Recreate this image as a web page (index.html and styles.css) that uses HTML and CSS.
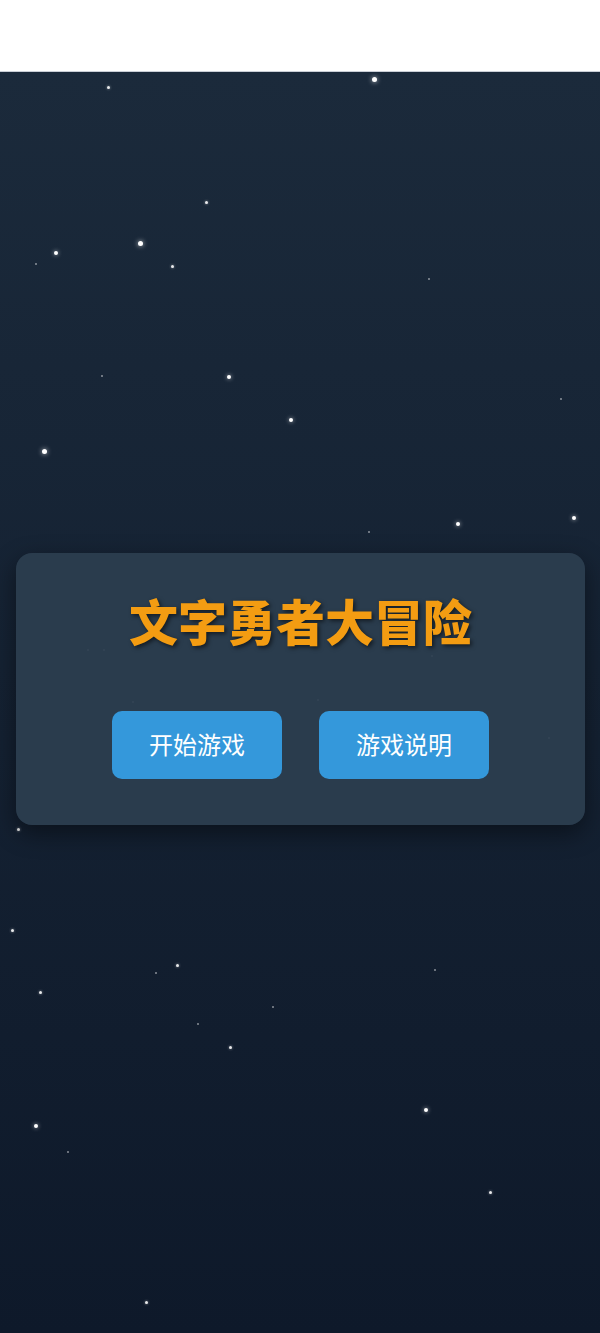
FILE: index.html
```html
<!DOCTYPE html>
<html lang="zh-CN">
<head>
    <meta charset="UTF-8">
    <meta name="viewport" content="width=device-width, initial-scale=1.0">
    <title>文字勇者大冒险</title>
    <link rel="stylesheet" href="styles.css">
</head>
<body>
    <div class="top-bar"></div>

    <div class="game-screen">
        <!-- star field -->
        <div class="stars">
            <span class="star s" style="left:107px;top:86px"></span>
            <span class="star l" style="left:372px;top:77px"></span>
            <span class="star s" style="left:205px;top:201px"></span>
            <span class="star l" style="left:138px;top:241px"></span>
            <span class="star m" style="left:54px;top:251px"></span>
            <span class="star s" style="left:171px;top:265px"></span>
            <span class="star t" style="left:428px;top:278px"></span>
            <span class="star t" style="left:35px;top:263px"></span>
            <span class="star m" style="left:227px;top:375px"></span>
            <span class="star t" style="left:101px;top:375px"></span>
            <span class="star t" style="left:560px;top:398px"></span>
            <span class="star m" style="left:289px;top:418px"></span>
            <span class="star l" style="left:42px;top:449px"></span>
            <span class="star m" style="left:456px;top:522px"></span>
            <span class="star m" style="left:572px;top:516px"></span>
            <span class="star t" style="left:368px;top:531px"></span>
            <span class="star t" style="left:87px;top:649px"></span>
            <span class="star t" style="left:103px;top:649px"></span>
            <span class="star t" style="left:132px;top:701px"></span>
            <span class="star t" style="left:431px;top:655px"></span>
            <span class="star t" style="left:317px;top:699px"></span>
            <span class="star t" style="left:548px;top:737px"></span>
            <span class="star s" style="left:17px;top:828px"></span>
            <span class="star s" style="left:11px;top:929px"></span>
            <span class="star s" style="left:176px;top:964px"></span>
            <span class="star t" style="left:155px;top:972px"></span>
            <span class="star t" style="left:434px;top:969px"></span>
            <span class="star s" style="left:39px;top:991px"></span>
            <span class="star t" style="left:272px;top:1006px"></span>
            <span class="star t" style="left:197px;top:1023px"></span>
            <span class="star s" style="left:229px;top:1046px"></span>
            <span class="star m" style="left:424px;top:1108px"></span>
            <span class="star m" style="left:34px;top:1124px"></span>
            <span class="star t" style="left:67px;top:1151px"></span>
            <span class="star s" style="left:489px;top:1191px"></span>
            <span class="star s" style="left:145px;top:1301px"></span>
        </div>

        <div class="menu-card">
            <h1 class="game-title">文字勇者大冒险</h1>
            <div class="menu-buttons">
                <button class="btn" id="start-btn">开始游戏</button>
                <button class="btn" id="help-btn">游戏说明</button>
            </div>
        </div>
    </div>
</body>
</html>
```

FILE: styles.css
```css
* {
    margin: 0;
    padding: 0;
    box-sizing: border-box;
}

body {
    font-family: "Noto Sans", "Noto Sans CJK SC", sans-serif;
    background: #0e192a;
    min-height: 100vh;
}

.top-bar {
    height: 72px;
    background: #fff;
    border-bottom: 1px solid #c9ced6;
}

.game-screen {
    min-height: 1261px;
    background: linear-gradient(180deg, #1b2a3b 0%, #0e192a 100%);
    padding: 481px 15px 0 16px;
}

.stars {
    position: absolute;
    top: 0;
    left: 0;
    width: 100%;
    height: 100%;
    pointer-events: none;
}

.star {
    position: absolute;
    background: #fff;
    border-radius: 50%;
}

.star.t {
    width: 2px;
    height: 2px;
    opacity: 0.5;
}

.star.s {
    width: 3px;
    height: 3px;
    opacity: 0.9;
    box-shadow: 0 0 3px rgba(255, 255, 255, 0.6);
}

.star.m {
    width: 4px;
    height: 4px;
    box-shadow: 0 0 4px rgba(255, 255, 255, 0.7);
}

.star.l {
    width: 5px;
    height: 5px;
    box-shadow: 0 0 5px rgba(255, 255, 255, 0.8);
}

.menu-card {
    position: relative;
    background: rgba(44, 62, 80, 0.93);
    border-radius: 16px;
    box-shadow: 0 8px 24px rgba(0, 0, 0, 0.45);
    padding: 40px 20px 46px;
    text-align: center;
}

.game-title {
    color: #f39c12;
    font-size: 49px;
    line-height: 58px;
    font-weight: 900;
    text-shadow: 2px 2px 4px rgba(0, 0, 0, 0.55);
    margin-bottom: 60px;
}

.menu-buttons {
    display: flex;
    justify-content: center;
    gap: 37px;
}

.btn {
    background: #3498db;
    color: #fff;
    border: none;
    border-radius: 10px;
    font-family: inherit;
    font-size: 24px;
    line-height: 38px;
    padding: 15px 37px;
    cursor: pointer;
}

.btn:hover {
    background: #2980b9;
}
```
